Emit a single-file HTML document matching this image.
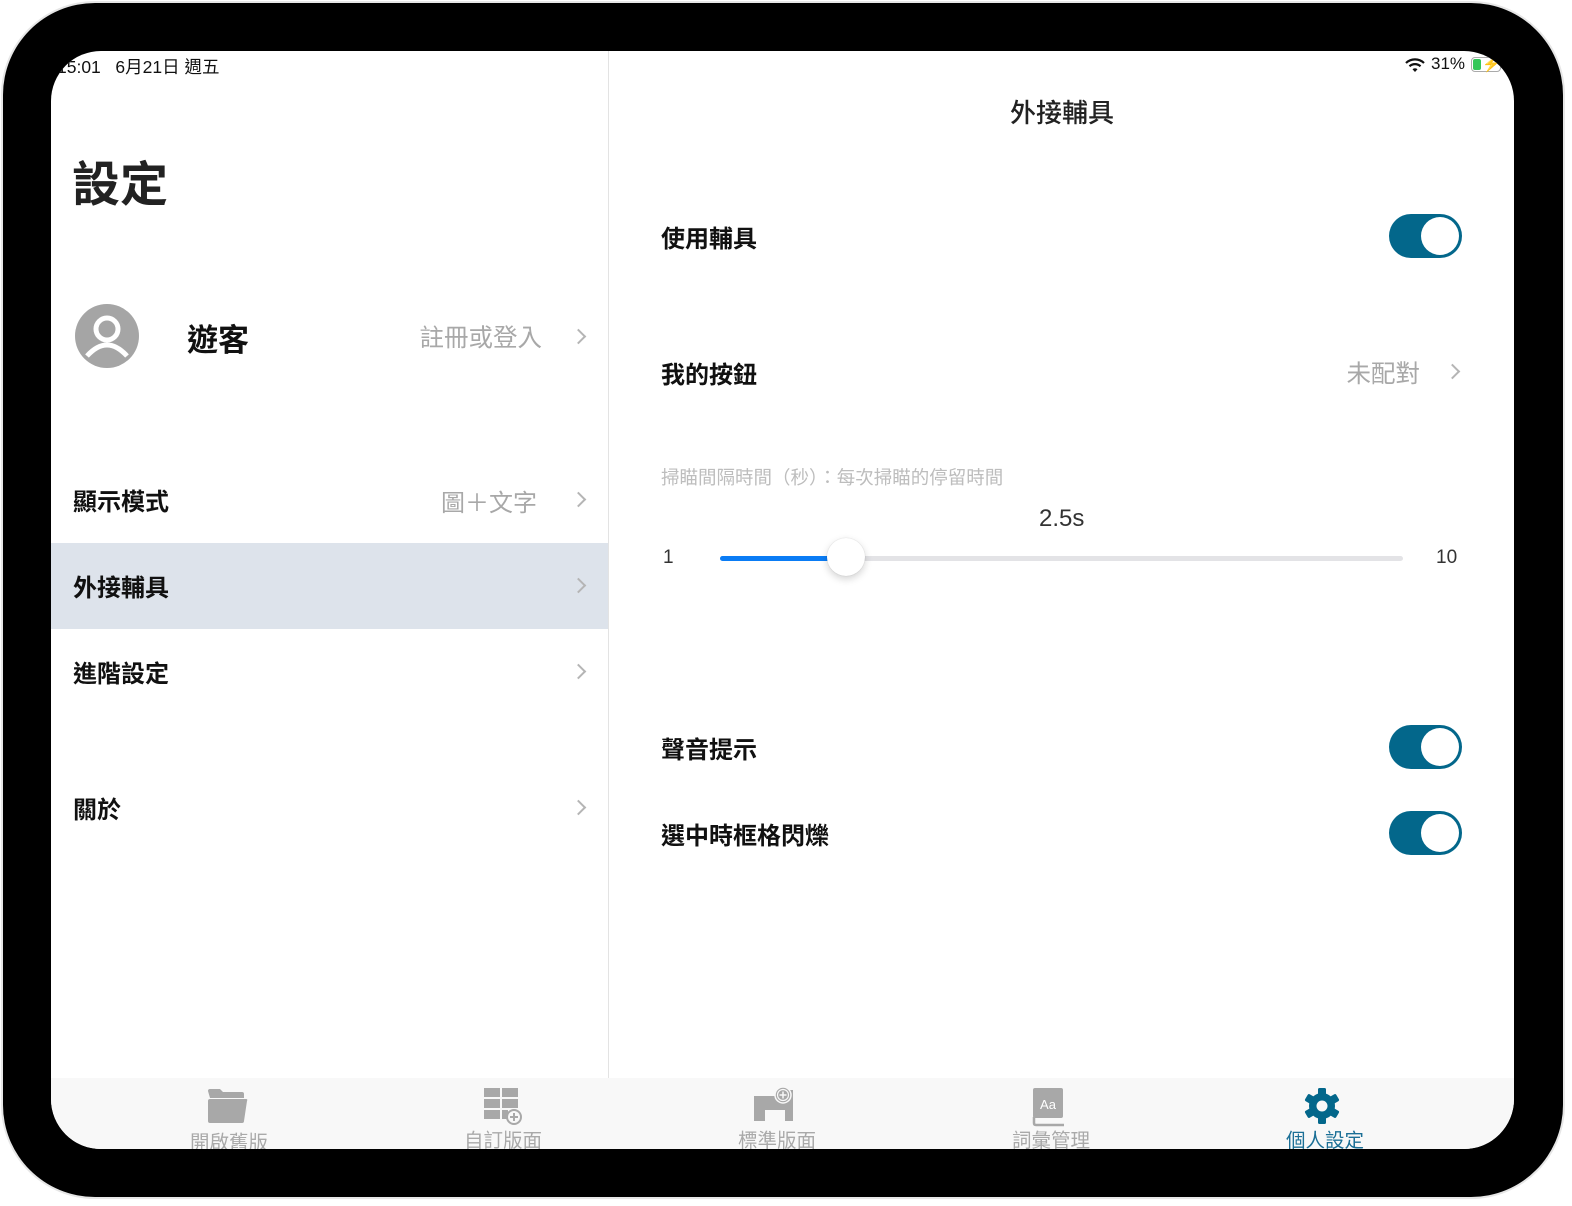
<!DOCTYPE html>
<html><head><meta charset="utf-8">
<style>
*{margin:0;padding:0;box-sizing:border-box}
body{width:1572px;height:1206px;background:#fff;position:relative;overflow:hidden;font-family:"Liberation Sans","Noto Sans CJK TC",sans-serif;color:#111}
.bezel{position:absolute;left:3px;top:3px;width:1560px;height:1194px;background:#000;border-radius:92px;box-shadow:0 0 0 2px #e6e6e6}
.screen{position:absolute;left:51px;top:51px;width:1463px;height:1098px;background:#fff;border-radius:50px;overflow:hidden}
.a{position:absolute;white-space:nowrap}
.b{font-weight:700}
.chev{position:absolute;width:11px;height:11px;border-right:2px solid #b5b5b5;border-top:2px solid #b5b5b5;transform:rotate(45deg)}
.tog{position:absolute;width:73px;height:44px;border-radius:22px;background:#03678b}
.tog::after{content:"";position:absolute;right:3px;top:3px;width:38px;height:38px;border-radius:50%;background:#fff}
.gray{color:#a8a8a8}
.r{text-align:right}
</style></head><body>
<div class="bezel"></div>
<div class="screen">
  <div class="a" style="left:6px;top:3px;font-size:17.5px;color:#111">15:01&nbsp;&nbsp;&nbsp;6月21日 週五</div>
  <svg class="a" style="left:1354px;top:6px" width="20" height="16" viewBox="0 0 20 16"><path d="M1 6 A13 13 0 0 1 19 6" stroke="#111" stroke-width="2.2" fill="none"/><path d="M4.5 9.3 A8 8 0 0 1 15.5 9.3" stroke="#111" stroke-width="2.2" fill="none"/><path d="M7.5 12.3 A3.5 3.5 0 0 1 12.5 12.3 L10 15Z" fill="#111"/></svg>
  <div class="a" style="left:1380px;top:3px;font-size:17px">31%</div>
  <div class="a" style="left:1420px;top:6px;width:30px;height:15px;border:1px solid #aaa;border-radius:4px"><div style="position:absolute;left:1px;top:1px;width:8px;height:11px;background:#34c759;border-radius:2px"></div><div style="position:absolute;left:10px;top:-3px;font-size:15px;font-weight:700">⚡</div></div>

  <div class="a" style="left:557px;top:0;width:1px;height:1027px;background:#e3e3e3"></div>

  <div class="a b" style="left:21px;top:94px;font-size:48px;color:#222">設定</div>
  <svg class="a" style="left:24px;top:253px" width="64" height="64" viewBox="0 0 64 64"><circle cx="32" cy="32" r="32" fill="#a5a5a5"/><circle cx="32" cy="25" r="11" fill="none" stroke="#fff" stroke-width="5"/><path d="M12 52 Q32 30 52 52" fill="none" stroke="#fff" stroke-width="5"/></svg>
  <div class="a b" style="left:136px;top:264px;font-size:31px">遊客</div>
  <div class="a gray r" style="right:972px;top:268px;font-size:24.5px">註冊或登入</div>
  <div class="chev" style="left:522px;top:280px"></div>

  <div class="a b" style="left:22px;top:431px;font-size:24px">顯示模式</div>
  <div class="a gray r" style="right:977px;top:432px;font-size:24px">圖＋文字</div>
  <div class="chev" style="left:522px;top:443px"></div>

  <div class="a" style="left:0;top:492px;width:557px;height:86px;background:#dde3eb"></div>
  <div class="a b" style="left:22px;top:517px;font-size:24px">外接輔具</div>
  <div class="chev" style="left:522px;top:529px"></div>

  <div class="a b" style="left:22px;top:603px;font-size:24px">進階設定</div>
  <div class="chev" style="left:522px;top:615px"></div>

  <div class="a b" style="left:22px;top:739px;font-size:24px">關於</div>
  <div class="chev" style="left:522px;top:751px"></div>

  <div class="a" style="left:959px;top:42px;font-size:26px;font-weight:500;color:#222">外接輔具</div>
  <div class="a b" style="left:610px;top:168px;font-size:24px">使用輔具</div>
  <div class="tog" style="left:1338px;top:163px"></div>

  <div class="a b" style="left:610px;top:304px;font-size:24px">我的按鈕</div>
  <div class="a gray r" style="right:94px;top:304px;font-size:24.5px">未配對</div>
  <div class="chev" style="left:1396px;top:315px"></div>

  <div class="a" style="left:610px;top:413px;font-size:18.5px;color:#bdbdbd">掃瞄間隔時間（秒）：每次掃瞄的停留時間</div>
  <div class="a" style="left:988px;top:454px;font-size:24px;color:#333">2.5s</div>
  <div class="a" style="left:612px;top:496px;font-size:19px;color:#333">1</div>
  <div class="a" style="left:1385px;top:496px;font-size:19px;color:#333">10</div>
  <div class="a" style="left:669px;top:505px;width:683px;height:5px;border-radius:3px;background:#e3e3e6"></div>
  <div class="a" style="left:669px;top:505px;width:128px;height:5px;border-radius:3px;background:#0a7cf5"></div>
  <div class="a" style="left:776px;top:487px;width:38px;height:38px;border-radius:50%;background:#fff;box-shadow:0 3px 8px rgba(0,0,0,.18),0 0 1px rgba(0,0,0,.2)"></div>

  <div class="a b" style="left:610px;top:679px;font-size:24px">聲音提示</div>
  <div class="tog" style="left:1338px;top:674px"></div>
  <div class="a b" style="left:610px;top:765px;font-size:24px">選中時框格閃爍</div>
  <div class="tog" style="left:1338px;top:760px"></div>

  <div class="a" style="left:0;top:1027px;width:1463px;height:71px;background:#f8f8f8"></div>
  <svg class="a" style="left:155px;top:1037px" width="42" height="36" viewBox="0 0 42 36"><path d="M2 3 Q2 1 4 1 L14 1 L17 4 L36 4 Q38 4 38 6 L38 10 L4 10Z" fill="#a8a8a8"/><path d="M4 11 L40 11 Q42 11 41 13 L38 33 Q38 35 36 35 L4 35 Q2 35 2 33 L2 13 Q2 11 4 11Z" fill="#a8a8a8"/></svg>
  <div class="a" style="left:139px;top:1075px;font-size:19.5px;color:#a9a9a9">開啟舊版</div>
  <svg class="a" style="left:433px;top:1037px" width="38" height="38" viewBox="0 0 38 38"><rect x="0" y="0" width="16" height="9" fill="#a8a8a8"/><rect x="18" y="0" width="16" height="9" fill="#a8a8a8"/><rect x="0" y="11" width="16" height="9" fill="#a8a8a8"/><rect x="18" y="11" width="16" height="9" fill="#a8a8a8"/><rect x="0" y="22" width="16" height="9" fill="#a8a8a8"/><rect x="18" y="22" width="6" height="9" fill="#a8a8a8"/><circle cx="30" cy="29" r="7" fill="#f8f8f8" stroke="#a8a8a8" stroke-width="2"/><path d="M30 25v8M26 29h8" stroke="#a8a8a8" stroke-width="2"/></svg>
  <div class="a" style="left:413px;top:1073px;font-size:19.5px;color:#a9a9a9">自訂版面</div>
  <svg class="a" style="left:702px;top:1035px" width="42" height="36" viewBox="0 0 42 36"><path d="M1 10 L24 10 L24 4 L40 4 L40 35 L32 35 L32 24 L12 24 L12 35 L1 35Z" fill="#a8a8a8"/><circle cx="30" cy="9" r="8" fill="#a8a8a8" stroke="#f8f8f8" stroke-width="1.5"/><circle cx="30" cy="9" r="5.5" fill="none" stroke="#f8f8f8" stroke-width="1.2"/><path d="M30 5.5v7M26.5 9h7" stroke="#f8f8f8" stroke-width="1.5"/></svg>
  <div class="a" style="left:687px;top:1073px;font-size:19.5px;color:#a9a9a9">標準版面</div>
  <svg class="a" style="left:981px;top:1036px" width="34" height="40" viewBox="0 0 34 40"><rect x="1" y="1" width="30" height="30" rx="2" fill="#a8a8a8"/><path d="M2 30 L2 36 Q2 38 4 38 L32 38" stroke="#a8a8a8" stroke-width="2.5" fill="none"/><text x="16" y="22" font-size="13" fill="#fff" text-anchor="middle" font-family="Liberation Sans">Aa</text></svg>
  <div class="a" style="left:961px;top:1073px;font-size:19.5px;color:#a9a9a9">詞彙管理</div>
  <svg class="a" style="left:1252px;top:1036px" width="38" height="38" viewBox="0 0 38 38"><g fill="#03678b"><circle cx="19" cy="19" r="13"/><rect x="15" y="1" width="8" height="36" rx="1.5"/><rect x="15" y="1" width="8" height="36" rx="1.5" transform="rotate(60 19 19)"/><rect x="15" y="1" width="8" height="36" rx="1.5" transform="rotate(120 19 19)"/></g><circle cx="19" cy="19" r="5.5" fill="#f8f8f8"/></svg>
  <div class="a" style="left:1235px;top:1073px;font-size:19.5px;color:#1b6f96">個人設定</div>
</div>
</body></html>
